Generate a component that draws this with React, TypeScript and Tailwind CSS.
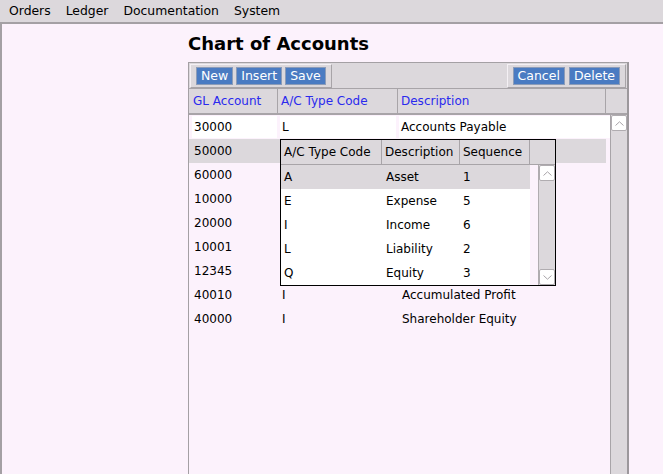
import React from "react";

const menus = ["Orders", "Ledger", "Documentation", "System"];

const accounts = [
  { gl: "30000", type: "L", desc: "Accounts Payable" },
  { gl: "50000", type: "", desc: "" },
  { gl: "60000", type: "", desc: "" },
  { gl: "10000", type: "", desc: "" },
  { gl: "20000", type: "", desc: "" },
  { gl: "10001", type: "", desc: "" },
  { gl: "12345", type: "", desc: "" },
  { gl: "40010", type: "I", desc: "Accumulated Profit" },
  { gl: "40000", type: "I", desc: "Shareholder Equity" },
];

const typeCodes = [
  { code: "A", desc: "Asset", seq: "1" },
  { code: "E", desc: "Expense", seq: "5" },
  { code: "I", desc: "Income", seq: "6" },
  { code: "L", desc: "Liability", seq: "2" },
  { code: "Q", desc: "Equity", seq: "3" },
];

function Chevron({ up }: { up?: boolean }) {
  return (
    <svg width="9" height="5" viewBox="0 0 9 5" className="block">
      <path
        d={up ? "M0.5 4.5 L4.5 0.8 L8.5 4.5" : "M0.5 0.5 L4.5 4.2 L8.5 0.5"}
        fill="none"
        stroke="#a8a4a8"
        strokeWidth="1"
      />
    </svg>
  );
}

function ScrollBtn({ up }: { up?: boolean }) {
  return (
    <div className="h-[16px] w-full flex items-center justify-center bg-white border border-[#b0acb0] rounded-[2px]">
      <Chevron up={up} />
    </div>
  );
}

function Btn({ label }: { label: string }) {
  return (
    <button className="h-[18px] px-[4px] bg-[#4a7bc2] text-white text-[12.5px] leading-[16px] border border-[#8c9cb8]">
      {label}
    </button>
  );
}

function TypeDropdown() {
  return (
    <div className="absolute left-[91px] top-[76px] w-[276px] h-[147px] border border-black bg-[#fcf2fc] flex flex-col">
      <div className="flex h-[25px] bg-[#dcd8dc] border-b border-[#a8a4a8]">
        <div className="w-[101px] pl-[3px] flex items-center border-r border-[#a8a4a8]">A/C Type Code</div>
        <div className="w-[78px] pl-[3px] flex items-center border-r border-[#a8a4a8]">Description</div>
        <div className="w-[70px] pl-[3px] flex items-center border-r border-[#a8a4a8]">Sequence</div>
        <div className="flex-1" />
      </div>
      <div className="flex flex-1">
        <div className="w-[249px] flex flex-col">
          {typeCodes.map((t, i) => (
            <div
              key={t.code}
              className={`flex h-[24px] items-center ${i === 0 ? "bg-[#dcd8dc]" : "bg-white"}`}
            >
              <div className="w-[101px] pl-[3px]">{t.code}</div>
              <div className="w-[78px] pl-[4px]">{t.desc}</div>
              <div className="w-[70px] pl-[3px]">{t.seq}</div>
            </div>
          ))}
        </div>
        <div className="w-[8px]" />
        <div className="w-[17px] flex flex-col bg-[#dcd8dc] border-l border-[#b0acb0]">
          <ScrollBtn up />
          <div className="flex-1" />
          <ScrollBtn />
        </div>
      </div>
    </div>
  );
}

export default function App() {
  return (
    <div
      className="w-[663px] h-[474px] overflow-hidden flex flex-col text-[12px] text-black"
      style={{ fontFamily: '"DejaVu Sans", Verdana, sans-serif' }}
    >
      {/* Menu bar */}
      <div className="h-[22px] bg-[#dcd8dc] flex items-center pl-[9px] gap-[15px] text-[12.4px]">
        {menus.map((m) => (
          <span key={m}>{m}</span>
        ))}
      </div>

      {/* Page */}
      <div className="flex-1 bg-[#fcf2fc] border-l-2 border-t-2 border-[#a4a0a4] pl-[186px] flex flex-col min-h-0">
        <h1 className="text-[18px] font-bold leading-[22px] mt-[9px] mb-[7px]">Chart of Accounts</h1>

        <div className="w-[441px] flex-1 border-l border-r-2 border-t border-[#a4a0a4] border-r-[#9c989c] flex flex-col relative">
          {/* Toolbar */}
          <div className="h-[26px] bg-[#dcd8dc] flex items-center justify-between px-[1px] border-b border-[#a8a4a8]">
            <div className="h-[24px] flex items-center gap-[3px] px-[5px] border border-[#f4f0f4] border-r-[#a8a4a8] border-b-[#a8a4a8]">
              <Btn label="New" />
              <Btn label="Insert" />
              <Btn label="Save" />
            </div>
            <div className="h-[24px] flex items-center gap-[4px] px-[5px] border border-[#f4f0f4] border-r-[#a8a4a8] border-b-[#a8a4a8]">
              <Btn label="Cancel" />
              <Btn label="Delete" />
            </div>
          </div>

          {/* Header */}
          <div className="flex h-[26px] bg-[#dcd8dc] text-[#2a2aee] border-b-2 border-[#a8a4a8]">
            <div className="w-[89px] pl-[4px] flex items-center border-r border-[#a8a4a8]">GL Account</div>
            <div className="w-[120px] pl-[3px] flex items-center border-r border-[#a8a4a8]">A/C Type Code</div>
            <div className="w-[208px] pl-[3px] flex items-center border-r border-[#a8a4a8]">Description</div>
            <div className="flex-1" />
          </div>

          {/* Body */}
          <div className="flex flex-1 min-h-0">
            <div className="w-[423px] flex flex-col">
              {accounts.map((a, i) =>
                i === 0 ? (
                  <div key={a.gl} className="flex h-[24px] py-[1px]">
                    <div className="w-[89px] pl-[3px] pr-[1px]">
                      <div className="h-full bg-white pl-[2px] flex items-center">{a.gl}</div>
                    </div>
                    <div className="w-[120px] pl-[2px] pr-[2px]">
                      <div className="h-full bg-white pl-[2px] flex items-center">{a.type}</div>
                    </div>
                    <div className="w-[208px] pl-[1px]">
                      <div className="h-full bg-white pl-[2px] flex items-center">{a.desc}</div>
                    </div>
                    <div className="flex-1 bg-white" />
                  </div>
                ) : (
                  <div
                    key={a.gl}
                    className={`flex h-[24px] items-center ${i === 1 ? "bg-[#dcd8dc] w-[417px]" : ""}`}
                  >
                    <div className="w-[89px] pl-[5px]">{a.gl}</div>
                    <div className="w-[120px] pl-[4px]">{a.type}</div>
                    <div className="w-[208px] pl-[4px]">{a.desc}</div>
                  </div>
                )
              )}
            </div>
            <div className="w-[17px] bg-[#dcd8dc] border-l border-[#a8a4a8] flex flex-col">
              <ScrollBtn up />
            </div>
          </div>

          <TypeDropdown />
        </div>
      </div>
    </div>
  );
}
